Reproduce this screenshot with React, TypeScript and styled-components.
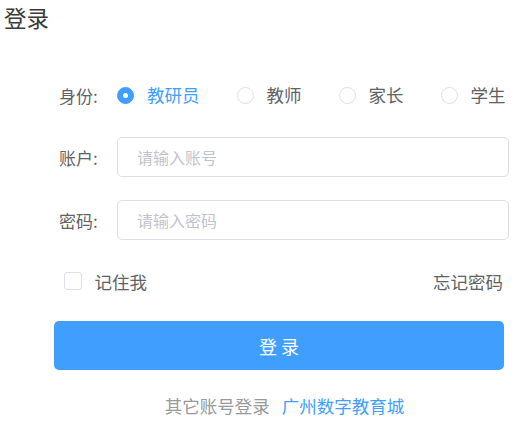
import React, { useState } from "react";
import styled, { createGlobalStyle } from "styled-components";

const Global = createGlobalStyle`
  html, body { margin: 0; padding: 0; background: #fff; }
  body { font-family: "Noto Sans CJK SC", "Noto Sans", sans-serif; }
  * { box-sizing: border-box; }
`;

const Page = styled.div`
  width: 524px;
  height: 426px;
  overflow: hidden;
  background: #fff;
`;

const Title = styled.h1`
  margin: 0;
  padding-left: 4px;
  height: 34px;
  line-height: 34px;
  font-size: 22.5px;
  font-weight: 400;
  color: #3a3a3a;
`;

const Form = styled.div`
  margin: 41px 0 0 54px;
  width: 455px;
  display: flex;
  flex-direction: column;
`;

const Row = styled.div<{ $gap?: number }>`
  display: flex;
  align-items: center;
  height: 40px;
  margin-top: ${(p) => p.$gap ?? 0}px;
`;

const Label = styled.div`
  width: 63px;
  flex: none;
  padding-left: 5px;
  font-size: 17px;
  color: #606266;
  white-space: nowrap;
`;

const RadioGroup = styled.div`
  display: flex;
  align-items: center;
  gap: 37px;
`;

const RadioItem = styled.label`
  display: flex;
  align-items: center;
  gap: 13px;
  cursor: pointer;
`;

const RadioCircle = styled.span<{ $on: boolean }>`
  width: 17px;
  height: 17px;
  border-radius: 50%;
  border: 1px solid ${(p) => (p.$on ? "#409eff" : "#dcdfe6")};
  background: ${(p) => (p.$on ? "#409eff" : "#fff")};
  display: flex;
  align-items: center;
  justify-content: center;
  &::after {
    content: "";
    width: 5px;
    height: 5px;
    border-radius: 50%;
    background: #fff;
    display: ${(p) => (p.$on ? "block" : "none")};
  }
`;

const RadioText = styled.span<{ $on: boolean }>`
  font-size: 17.5px;
  color: ${(p) => (p.$on ? "#409eff" : "#606266")};
  line-height: 1;
`;

const Input = styled.input`
  flex: 1;
  height: 40px;
  border: 1px solid #dcdfe6;
  border-radius: 5px;
  padding: 0 19px;
  font-family: inherit;
  font-size: 16px;
  color: #606266;
  outline: none;
  &::placeholder {
    color: #c0c4cc;
  }
`;

const OptionRow = styled.div`
  display: flex;
  align-items: center;
  justify-content: space-between;
  height: 40px;
  margin-top: 22px;
  padding: 0 6px 2px 10px;
`;

const CheckItem = styled.label`
  display: flex;
  align-items: center;
  gap: 13px;
  cursor: pointer;
`;

const CheckBox = styled.span`
  width: 17.5px;
  height: 17.5px;
  border: 1px solid #dcdfe6;
  border-radius: 3px;
  background: #fff;
`;

const PlainText = styled.span`
  font-size: 17.5px;
  color: #606266;
`;

const Forgot = styled.a`
  font-size: 17.5px;
  color: #606266;
  cursor: pointer;
`;

const Button = styled.button`
  margin-top: 19px;
  width: 450px;
  height: 49px;
  border: none;
  border-radius: 5px;
  background: #409eff;
  color: #fff;
  font-family: inherit;
  font-size: 18px;
  cursor: pointer;
  padding: 0;
`;

const Footer = styled.div`
  margin-top: 23px;
  height: 24px;
  display: flex;
  justify-content: center;
  align-items: center;
  gap: 12px;
  padding-left: 6px;
  font-size: 17.5px;
`;

const Muted = styled.span`
  color: #999;
`;

const Link = styled.a`
  color: #409eff;
  cursor: pointer;
`;

const roles = ["教研员", "教师", "家长", "学生"];

export default function App() {
  const [role, setRole] = useState("教研员");
  return (
    <Page>
      <Global />
      <Title>登录</Title>
      <Form>
        <Row>
          <Label>身份:</Label>
          <RadioGroup>
            {roles.map((r) => (
              <RadioItem key={r} onClick={() => setRole(r)}>
                <RadioCircle $on={role === r} />
                <RadioText $on={role === r}>{r}</RadioText>
              </RadioItem>
            ))}
          </RadioGroup>
        </Row>
        <Row $gap={22}>
          <Label>账户:</Label>
          <Input placeholder="请输入账号" />
        </Row>
        <Row $gap={23}>
          <Label>密码:</Label>
          <Input type="password" placeholder="请输入密码" />
        </Row>
        <OptionRow>
          <CheckItem>
            <CheckBox />
            <PlainText>记住我</PlainText>
          </CheckItem>
          <Forgot>忘记密码</Forgot>
        </OptionRow>
        <Button>登 录</Button>
        <Footer>
          <Muted>其它账号登录</Muted>
          <Link>广州数字教育城</Link>
        </Footer>
      </Form>
    </Page>
  );
}
